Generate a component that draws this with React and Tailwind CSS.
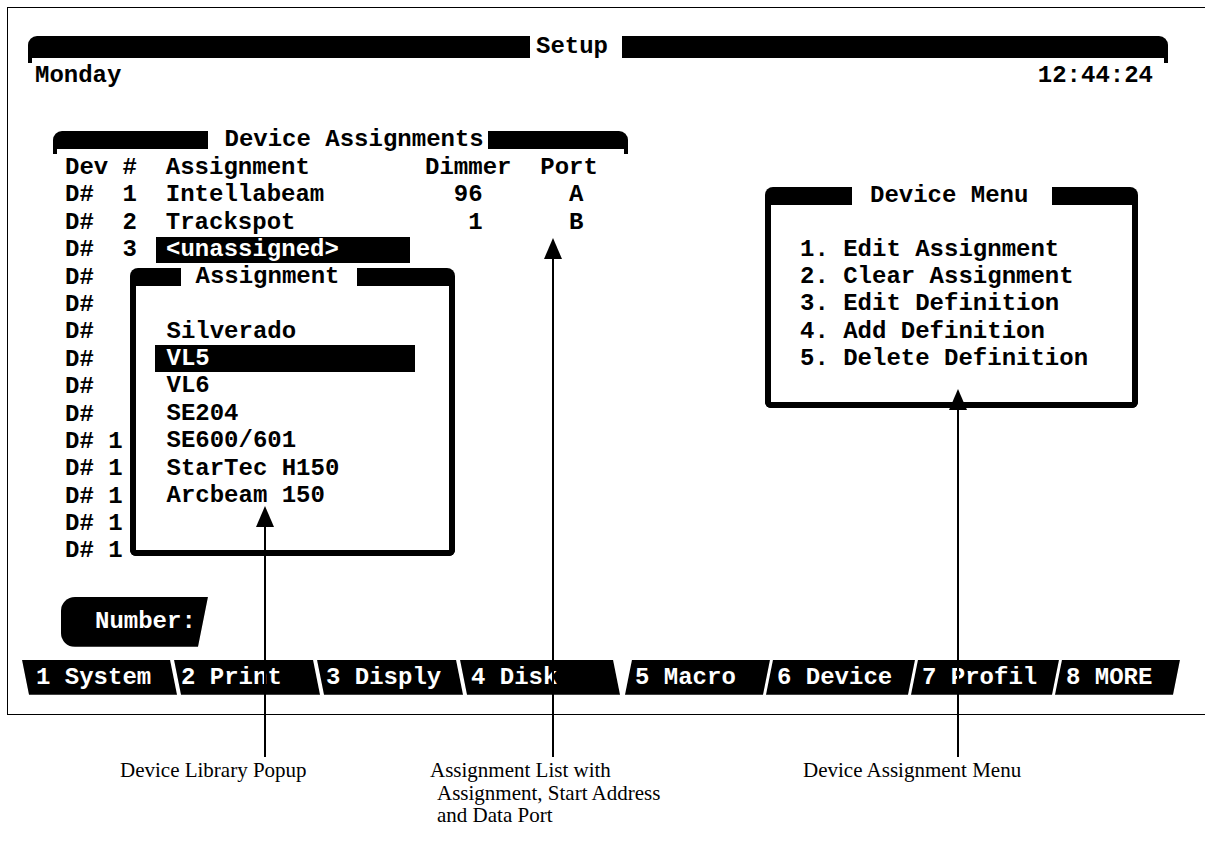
import React from "react";

const mono = "font-['Liberation_Mono',monospace] font-bold text-[24px]";
const row = "h-[27.4px] leading-[27.4px] whitespace-pre";

// black title strip: rounded outer corner with a short stub hanging from the outer end
function TitleBar({ side, tall, className = "" }) {
  const outer = side === "left" ? "rounded-tl-[9px]" : "flex-row-reverse rounded-tr-[9px]";
  return (
    <div className={`flex shrink-0 overflow-hidden ${tall ? "h-[27px]" : "h-[23px]"} ${outer} ${className}`}>
      <div className="w-[4px] bg-black" />
      <div className={`flex-1 bg-black ${tall ? "h-[22px]" : "h-[18px]"}`} />
    </div>
  );
}

function Panel({ title, leftW, gapL, gapR, className = "", bodyClass = "", children }) {
  return (
    <div className={className}>
      <div className="flex h-[18px] items-center bg-white">
        <div className={`h-full bg-black rounded-tl-[8px] ${leftW}`} />
        <span className={`leading-[18px] whitespace-pre ${gapL} ${gapR}`}>{title}</span>
        <div className="h-full flex-1 bg-black rounded-tr-[8px]" />
      </div>
      <div className={`border-x-[6px] border-b-[6px] border-black rounded-b-[6px] bg-white ${bodyClass}`}>
        {children}
      </div>
    </div>
  );
}

const rows = [
  "Dev #  Assignment        Dimmer  Port",
  "D#  1  Intellabeam         96      A",
  "D#  2  Trackspot            1      B",
  null,
  "D#",
  "D#",
  "D#",
  "D#",
  "D#",
  "D#",
  "D# 1",
  "D# 1",
  "D# 1",
  "D# 1",
  "D# 1",
];

const library = ["Silverado", "VL5", "VL6", "SE204", "SE600/601", "StarTec H150", "Arcbeam 150"];

const menu = [
  "1. Edit Assignment",
  "2. Clear Assignment",
  "3. Edit Definition",
  "4. Add Definition",
  "5. Delete Definition",
];

const back = "[clip-path:polygon(0_0,calc(100%_-_7px)_0,100%_100%,7px_100%)]";
const fwd = "[clip-path:polygon(7px_0,100%_0,calc(100%_-_7px)_100%,0_100%)]";

const fkeys = [
  { label: "1 System", cls: `w-[155px] pl-[14px] ${back}` },
  { label: "2 Print", cls: `w-[146px] -ml-[3px] pl-[7px] ${back}` },
  { label: "3 Disply", cls: `w-[146px] -ml-[3px] pl-[9px] ${back}` },
  { label: "4 Disk", cls: `w-[160px] -ml-[3px] pl-[11px] ${back}` },
  { label: "5 Macro", cls: `w-[145px] ml-[5px] pl-[10px] ${fwd}` },
  { label: "6 Device", cls: `w-[149px] -ml-[4px] pl-[11px] ${fwd}` },
  { label: "7 Profil", cls: `w-[148px] -ml-[4px] pl-[11px] ${fwd}` },
  { label: "8 MORE", cls: `w-[125px] -ml-[4px] pl-[11px] ${fwd}` },
];

export default function App() {
  return (
    <div className="relative w-[1205px] h-[862px] bg-white overflow-hidden text-black">
      <div className={`ml-[7px] mt-[7px] w-[1198px] h-[708px] border-l border-t border-b border-black ${mono}`}>
        {/* screen title */}
        <div className="flex items-start mt-[28px] pl-[20px]">
          <TitleBar side="left" tall className="w-[502px]" />
          <span className="ml-[6px] h-[22px] leading-[22px]">Setup</span>
          <TitleBar side="right" tall className="ml-[14px] w-[546px]" />
        </div>
        <div className="flex justify-between w-[1118px] ml-[27px] h-[26px] leading-[26px]">
          <span>Monday</span>
          <span>12:44:24</span>
        </div>

        <div className="flex items-start mt-[42px] ml-[45px]">
          {/* assignment list */}
          <div className="relative w-[575px]">
            <div className="flex items-start h-[23px]">
              <TitleBar side="left" className="w-[155px]" />
              <span className="ml-[16.5px] h-[18px] leading-[18px] whitespace-pre">Device Assignments</span>
              <TitleBar side="right" className="ml-[4.5px] flex-1" />
            </div>
            <div className="pl-[12px]">
              {rows.map((r, i) =>
                r === null ? (
                  <div key={i} className={`flex items-center ${row}`}>
                    <span>D#  3</span>
                    <span className="ml-[18.5px] w-[254px] h-[26px] leading-[26px] pl-[10.5px] bg-black text-white">
                      {"<unassigned>"}
                    </span>
                  </div>
                ) : (
                  <div key={i} className={row}>
                    {r}
                  </div>
                )
              )}
            </div>

            {/* device library popup */}
            <Panel
              title="Assignment"
              leftW="w-[51px]"
              gapL="ml-[14.5px]"
              gapR="mr-[17.5px]"
              className="absolute left-[77px] top-[137px] w-[325px]"
              bodyClass="pt-[31.7px] pb-[40.5px]"
            >
              {library.map((name) => (
                <div
                  key={name}
                  className={`ml-[19px] w-[260px] pl-[11.5px] ${row} ${name === "VL5" ? "bg-black text-white" : ""}`}
                >
                  {name}
                </div>
              ))}
            </Panel>
          </div>

          {/* device menu */}
          <Panel
            title="Device Menu"
            leftW="w-[87px]"
            gapL="ml-[18px]"
            gapR="mr-[24px]"
            className="ml-[137px] mt-[56px] w-[373px]"
            bodyClass="pt-[30.5px] pb-[29.5px] pl-[29px]"
          >
            {menu.map((m) => (
              <div key={m} className={row}>
                {m}
              </div>
            ))}
          </Panel>
        </div>

        <div className="ml-[53px] mt-[32px] w-[147px] h-[50px] bg-black rounded-l-[14px] [clip-path:polygon(0_0,100%_0,calc(100%_-_10px)_100%,0_100%)] pl-[34px] leading-[50px] text-white">
          Number:
        </div>

        <div className="flex ml-[14px] mt-[13px] h-[35px]">
          {fkeys.map((k) => (
            <div key={k.label} className={`shrink-0 h-[35px] leading-[35px] bg-black text-white whitespace-pre ${k.cls}`}>
              {k.label}
            </div>
          ))}
        </div>
      </div>

      {/* callout captions */}
      <div className="flex mt-[44px] font-['Liberation_Serif',serif] text-[21px] leading-[22.5px]">
        <div className="ml-[120px] w-[310px]">Device Library Popup</div>
        <div className="w-[373px]">
          <div>Assignment List with</div>
          <div className="pl-[7px]">Assignment, Start Address</div>
          <div className="pl-[7px]">and Data Port</div>
        </div>
        <div>Device Assignment Menu</div>
      </div>

      {/* callout arrows drawn over the screen */}
      <svg className="absolute inset-0 pointer-events-none" width="1205" height="862">
        <g stroke="black" strokeWidth="2">
          <line x1="265" y1="520" x2="265" y2="757" />
          <line x1="553" y1="255" x2="553" y2="757" />
          <line x1="958" y1="405" x2="958" y2="757" />
        </g>
        <g fill="black">
          <polygon points="265,506 256,527 274,527" />
          <polygon points="553,238 544,259 562,259" />
          <polygon points="958,389 949,410 967,410" />
        </g>
      </svg>
    </div>
  );
}
